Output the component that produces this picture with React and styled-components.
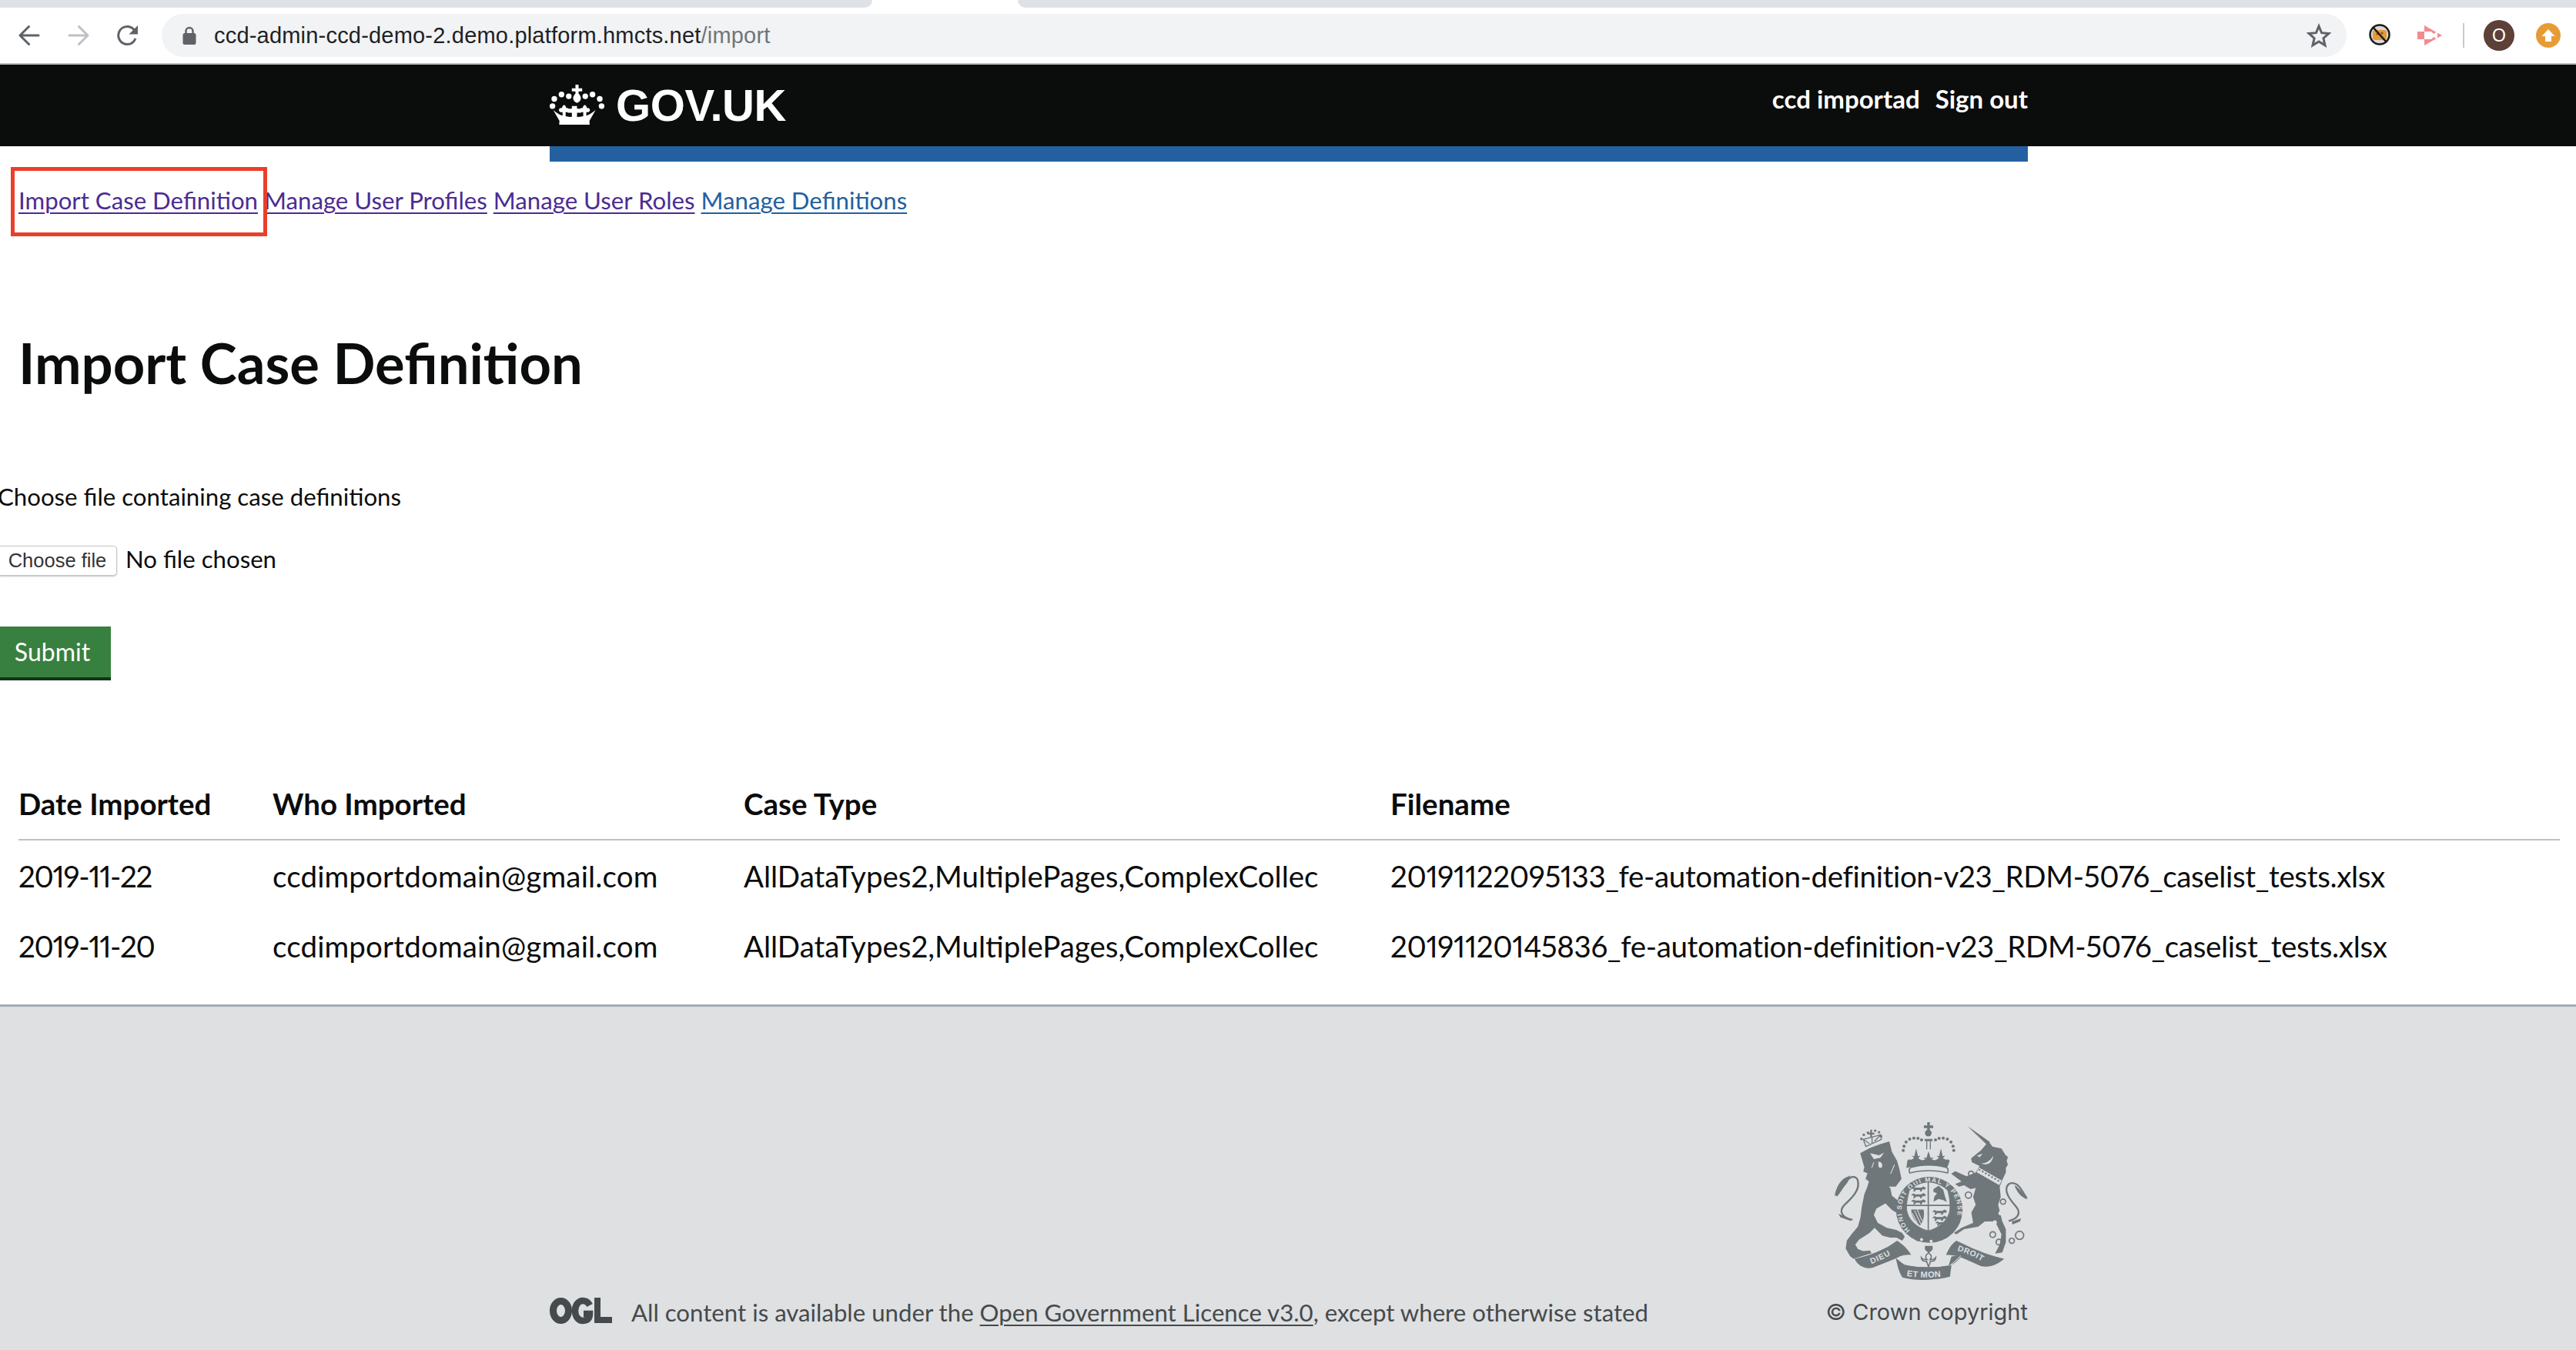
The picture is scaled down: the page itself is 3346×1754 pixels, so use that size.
import React from "react";
import styled, { createGlobalStyle } from "styled-components";

const BODY = `Lato, "Open Sans", "Liberation Sans", sans-serif`;

const Global = createGlobalStyle`
  html, body { margin: 0; padding: 0; background: #fff; }
  body { font-family: ${BODY}; color: #0b0c0c; overflow-x: hidden; }
  * { box-sizing: border-box; }
`;

const Page = styled.div`
  width: 3346px;
  height: 1754px;
  overflow: hidden;
  display: flex;
  flex-direction: column;
`;

/* ---------- browser chrome ---------- */
const Chrome = styled.div`
  height: 84px;
  border-bottom: 2px solid #b9babb;
  background: #fff;
  display: flex;
  flex-direction: column;
  flex: none;
`;
const TabStrip = styled.div`
  height: 10px;
  display: flex;
  justify-content: space-between;
`;
const TabEdge = styled.div`
  width: ${(p) => p.$w}px;
  background: #dee1e6;
  border-bottom-left-radius: ${(p) => (p.$right ? 12 : 0)}px;
  border-bottom-right-radius: ${(p) => (p.$right ? 0 : 12)}px;
`;
const Toolbar = styled.div`
  height: 56px;
  margin-top: 8px;
  display: flex;
  align-items: center;
  padding-left: 24px;
`;
const NavIcon = styled.svg`
  width: 28px;
  height: 28px;
  margin-right: ${(p) => p.$mr}px;
  flex: none;
`;
const Omnibox = styled.div`
  width: 2838px;
  height: 56px;
  border-radius: 28px;
  background: #f1f3f4;
  display: flex;
  align-items: center;
  padding-left: 27px;
  padding-right: 20px;
  flex: none;
`;
const LockIcon = styled.svg`
  width: 18px;
  height: 24px;
  margin-right: 23px;
  flex: none;
`;
const Url = styled.div`
  font-family: "Liberation Sans", Arial, sans-serif;
  font-size: 29px;
  color: #202124;
  flex: 1;
  white-space: nowrap;
  letter-spacing: 0.2px;
`;
const UrlPath = styled.span`
  color: #70757a;
`;
const StarIcon = styled.svg`
  width: 32px;
  height: 32px;
  flex: none;
`;
const ExtGroup = styled.div`
  display: flex;
  align-items: center;
  height: 56px;
  flex: none;
`;
const ExtIcon = styled.svg`
  width: ${(p) => p.$w}px;
  height: ${(p) => p.$h}px;
  margin-left: ${(p) => p.$ml}px;
  margin-top: ${(p) => p.$mt || 0}px;
  flex: none;
`;
const Divider = styled.div`
  width: 2px;
  height: 32px;
  background: #c8cacc;
  margin-left: 27px;
`;
const Avatar = styled.div`
  width: 40px;
  height: 40px;
  border-radius: 50%;
  background: #5d4037;
  color: #fff;
  font-family: "Liberation Sans", sans-serif;
  font-size: 23px;
  display: flex;
  align-items: center;
  justify-content: center;
  margin-left: 25px;
  flex: none;
`;
const UpdateBadge = styled.div`
  width: 32px;
  height: 32px;
  border-radius: 50%;
  background: #e69c36;
  margin-left: 28px;
  display: flex;
  align-items: center;
  justify-content: center;
  flex: none;
`;

/* ---------- gov.uk header ---------- */
const Header = styled.header`
  height: 106px;
  background: #0b0c0c;
  flex: none;
`;
const HeaderInner = styled.div`
  width: 1920px;
  margin-left: 714px;
  height: 100%;
  display: flex;
  justify-content: space-between;
  align-items: flex-start;
`;
const Logo = styled.a`
  display: flex;
  align-items: center;
  height: 96px;
  margin-top: 4px;
  gap: 15px;
  color: #fff;
  font-family: "Liberation Sans", Arial, sans-serif;
  font-weight: 700;
  font-size: 58px;
  letter-spacing: -0.4px;
`;
const CrownSvg = styled.svg`
  width: 71px;
  height: 52px;
  flex: none;
`;
const UserNav = styled.div`
  display: flex;
  gap: 20px;
  color: #fff;
  font-weight: 700;
  font-size: 33px;
  line-height: 40px;
  margin-top: 24px;
`;
const BlueBar = styled.div`
  width: 1920px;
  height: 20px;
  margin-left: 714px;
  background: #2460a0;
  flex: none;
`;

/* ---------- main content ---------- */
const Nav = styled.nav`
  height: 100px;
  padding-left: 24px;
  display: flex;
  gap: 8px;
  align-items: center;
  position: relative;
  flex: none;
`;
const NavLink = styled.a`
  font-size: 31.2px;
  line-height: 40px;
  text-decoration: underline;
  text-decoration-thickness: 2px;
  text-underline-offset: 4px;
  color: ${(p) => (p.$visited ? "#4c2c92" : "#22609f")};
`;
const Annotation = styled.div`
  position: absolute;
  left: 14px;
  top: 7px;
  width: 333px;
  height: 90px;
  border: 5px solid #ea3f2a;
  pointer-events: none;
`;
const Title = styled.h1`
  margin: 121px 0 0 24px;
  font-size: 72.4px;
  line-height: 80px;
  font-weight: 700;
`;
const Label = styled.label`
  display: block;
  margin: 114px 0 0 -3px;
  font-size: 31.2px;
  line-height: 40px;
`;
const FileRow = styled.div`
  display: flex;
  align-items: center;
  gap: 11px;
  height: 39px;
  margin-top: 44px;
  flex: none;
`;
const FileButton = styled.button`
  font-family: "Liberation Sans", Arial, sans-serif;
  font-size: 25.5px;
  width: 152px;
  height: 39px;
  padding: 0 2px 0 0;
  background: #fff;
  color: #333;
  border: 1px solid #c6c6c6;
  border-left: 0;
  border-radius: 0 5px 5px 0;
  box-shadow: 0 1px 2px rgba(0, 0, 0, 0.25);
  flex: none;
`;
const FileStatus = styled.span`
  font-size: 31.2px;
  line-height: 39px;
  margin-top: -4px;
`;
const Submit = styled.button`
  display: block;
  margin-top: 66px;
  width: 144px;
  height: 70px;
  padding: 0 8px 6px 0;
  background: #38803f;
  border: 0;
  box-shadow: inset 0 -4px 0 #15321a;
  color: #fff;
  font-family: ${BODY};
  font-size: 32px;
  flex: none;
`;
const Table = styled.table`
  margin: 113px 21px 0 24px;
  width: 3301px;
  border-collapse: collapse;
  table-layout: fixed;
  flex: none;
  font-variant-numeric: proportional-nums;
`;
const Th = styled.th`
  width: ${(p) => p.$w || "auto"};
  height: 94px;
  padding: 0;
  text-align: left;
  font-size: 38.5px;
  font-weight: 700;
  border-bottom: 2px solid #bfc1c3;
`;
const Td = styled.td`
  height: 92px;
  padding: 0;
  font-size: 38.5px;
  white-space: nowrap;
  overflow: visible;
  letter-spacing: ${(p) => p.$spacing || 0}px;
`;

/* ---------- footer ---------- */
const Footer = styled.footer`
  margin-top: 30px;
  height: 449px;
  background: #dee0e2;
  border-top: 3px solid #a1acb2;
  padding-bottom: 29px;
  display: flex;
  flex: none;
`;
const FooterInner = styled.div`
  width: 1920px;
  margin-left: 714px;
  display: flex;
  justify-content: space-between;
  align-items: flex-end;
`;
const Licence = styled.div`
  display: flex;
  align-items: center;
  gap: 25px;
  color: #454a4c;
  font-size: 31.2px;
  line-height: 40px;
  white-space: nowrap;
`;
const OglSvg = styled.svg`
  width: 81px;
  height: 36px;
  flex: none;
  margin-top: -4px;
`;
const LicenceLink = styled.a`
  color: #454a4c;
  text-decoration: underline;
  text-decoration-thickness: 2px;
  text-underline-offset: 4px;
`;
const CopyBlock = styled.div`
  display: flex;
  flex-direction: column;
  align-items: flex-end;
  gap: 22px;
`;
const CrestSvg = styled.svg`
  width: 252px;
  height: 205px;
`;
const Copy = styled.div`
  color: #454a4c;
  line-height: 40px;
  font-family: Inter, sans-serif;
  font-size: 29px;
`;

const Crown = () => (
  <CrownSvg viewBox="45 55 210 155" fill="#fff">
    <path d="M144 55h12v14h14v12h-14v8c6 6 9 13 9 19 0 9-7 15-15 18-8-3-15-9-15-18 0-6 3-13 9-19v-8h-14V69h14z" />
    {[[62, 110], [90, 93], [118, 100], [182, 100], [210, 93], [238, 110], [55, 138], [245, 138]].map(([x, y]) => (
      <circle key={x} cx={x} cy={y} r="11" />
    ))}
    <path d="M58 153c12 10 24 18 36 22v-14c-8 2-14-2-14-8 0-5 6-9 12-7 0-6 3-10 8-13 5 3 8 7 8 13 6-2 12 2 12 7 0 6-6 10-14 8v16c8 2 16 3 24 3v-16h-16v-16h16v-10h20v10h16v16h-16v16c8 0 16-1 24-3v-16c-8 2-14-2-14-8 0-5 6-9 12-7 0-6 3-10 8-13 5 3 8 7 8 13 6-2 12 2 12 7 0 6-6 10-14 8v14c12-4 24-12 36-22l-24 42 1 15H81l1-15z" />
  </CrownSvg>
);

const Ogl = () => (
  <OglSvg viewBox="0 0 81 36" fill="none" stroke="#454a4c">
    <ellipse cx="14.500" cy="18" rx="10" ry="12.500" strokeWidth="9" />
    <path d="M52 11c-2-4-5-6-9-6-6 0-10 6-10 13s4 13 10 13c6 0 9-3 9-9h-8" strokeWidth="8.500" />
    <path d="M62 1v29h19" strokeWidth="8" />
  </OglSvg>
);

const C = "#6f777b";
const B = "#dee0e2";

const crownDots = [
  [459, 195], [462, 178], [470, 162], [484, 151], [500, 147], [516, 148], [530, 154],
  [655, 195], [652, 178], [644, 162], [630, 151], [614, 147], [598, 148], [584, 154],
];
const lionCrownDots = [[297, 150], [306, 134], [322, 126], [350, 118], [365, 124], [373, 140]];
const passant = "M0 8l10-7 6 4h24l8-5 10 6-5 7-8-2-4 9h-6v-6H19l-4 6H9l2-10-7-1z";

const Crest = () => (
  <CrestSvg viewBox="190 85 752 612">
    <defs>
      <path id="garter" d="M486 505A109 109 0 1 1 636 505" />
      <path id="rib-l" d="M335 635Q390 615 436 583" />
      <path id="rib-c" d="M472 682Q555 694 645 680" />
      <path id="rib-r" d="M668 583Q730 600 788 640" />
      <path id="passant" d={passant} />
    </defs>

    {/* lion */}
    <path fill={C} d="M292 205l38-20 40-15 35-10 10 40 20 35 10 35 7 35-22 30h-22l7 35 25 20 22 20 3 20-25 10-25-15-25-25-35 20-10 25 15 30 35 20 37 8 23 12 10 15-10 15-22-12-25 0-30-8-30-30-20 20-40 25-15 20 10 17 20 8 27-2 6 10-38 12-32 10-13-10-17-30 4-30 18-25 25-30 10-35 5-40 10-50 10-25 8-25-13-10 7-22-16-6 4-17z" />
    <path fill={B} d="M330 205l35 8 20-10-15 20-25 5zM362 238c12 0 18 10 15 20-3 6-12 6-14-2z" />
    <path fill="none" stroke={B} strokeWidth="3" d="M405 335l35 32M345 240l-8 22M425 250l-15 35" />
    <path fill="none" stroke={C} strokeWidth="7" d="M262 463c-35-4-58-30-30-58 30-28 62-60 50-96-8-18-28-14-42 4-14 18-24 40-40 58" />
    <path fill={C} d="M193 372c4-30 20-60 42-72l20-8c-8 12-6 22-18 34-12 14-24 34-44 46zM208 440l50 22-3 6-40-14z" />
    <path fill="none" stroke={C} strokeWidth="4" d="M304 152l68-18 2 18-60 27zM304 152l24 16M372 134l-25 25M338 143v26" />
    <path fill={C} d="M322 126h9v-12h7v12h9v7h-9v9h-7v-9h-9z" />
    {lionCrownDots.map(([x, y]) => (
      <circle key={`${x}-${y}`} cx={x} cy={y} r="5" fill={C} />
    ))}

    {/* unicorn */}
    <path fill={C} d="M708 100l87 62-12 10z" />
    <path fill={C} d="M722 225l38-30 30-35 15 20 35 7 15 25 10 8-5 15 5 15-8 12 0 18-12 25-12 30 4 40-10 30 16 65 14 30v50l-14 40-28 5 18-35 7-40-25-50h-40l-25 20-55 10-30 20-10-5 30-20 45-20-7-40 17-30-10-30 10-35-20 5-25-15-20 5-15-10 25-10-40-30 15-10 45 20 35-15 15-25-30-15z" />
    <path fill="none" stroke={B} strokeWidth="20" d="M748 270l88 50" />
    <path fill="none" stroke={C} strokeWidth="6" strokeDasharray="7 7" d="M752 268l82 48" />
    <path fill="none" stroke={C} strokeWidth="3" d="M744 284l86 50" />
    <path fill={B} d="M745 215l22-8-12 14z" />
    <path fill={B} d="M760 245c20 0 38-10 48-30-2 24-20 42-48 30z" />
    <path fill="none" stroke={C} strokeWidth="7" d="M868 468c35-8 50-30 28-56-20-24-42-50-36-74 8-24 36-22 54 4l24 38" />
    <path fill={C} d="M940 384c-26-8-40-28-50-54 16 8 24 20 50 54zM880 470l36-12-4 12-30 12z" />
    <g fill="none" stroke={C} strokeWidth="5">
      <circle cx="722" cy="285" r="10" />
      <circle cx="712" cy="368" r="12" />
      <circle cx="846" cy="393" r="10" />
      <circle cx="806" cy="521" r="11" />
      <circle cx="830" cy="550" r="11" />
      <circle cx="880" cy="545" r="10" />
      <circle cx="910" cy="524" r="16" />
    </g>
    <g fill={B}>
      <circle cx="836" cy="438" r="8" />
      <circle cx="814" cy="474" r="8" />
    </g>

    {/* royal crown */}
    <path fill={C} d="M552 85h10v13h13v10h-13v8h-10v-8h-13V98h13z" />
    <circle cx="556" cy="127" r="13" fill={C} />
    <path fill="none" stroke={C} strokeWidth="4" d="M550 160v30M564 160v30" />
    <path fill={C} d="M542 150h30v9h-30zM475 235c3-6 8-6 12-4l14-6-8-10 9 2 7-30 7 30 9-2-8 10 14 8 14-3-8-8 12 2 8-26 8 26 12-2-8 8 14 3 14-8-8-10 9 2 7-30 7 30 9-2-8 10 14 6c4-2 9-2 12 4l-10 28c-50-14-110-14-158 0z" />
    {crownDots.map(([x, y]) => (
      <circle key={`${x}-${y}`} cx={x} cy={y} r="6" fill={C} />
    ))}
    <path fill={B} stroke={C} strokeWidth="5" d="M484 282c-4-10-2-18 6-22 40-12 95-12 135 0 8 4 10 12 6 22-45-12-102-12-147 0z" />

    {/* garter and shield */}
    <ellipse cx="560" cy="425" rx="129" ry="128" fill={C} />
    <text fontFamily="Liberation Sans, sans-serif" fontWeight="700" fontSize="25" fill={B} letterSpacing="4">
      <textPath href="#garter" startOffset="0">HONI SOIT QUI MAL Y PENSE</textPath>
    </text>
    <path fill={B} stroke={C} strokeWidth="3" d="M482 350c18-20 48-32 74-34 29 2 59 14 76 34 8 30 10 50 8 75-5 40-40 70-84 82-44-12-79-42-84-82-2-25 2-45 10-75z" />
    <path stroke={C} strokeWidth="5" d="M556 316v190M472 408h168" />
    <g fill={C}>
      <use href="#passant" x="489" y="334" />
      <use href="#passant" x="489" y="360" />
      <use href="#passant" x="489" y="384" />
      <use href="#passant" x="571" y="424" />
      <use href="#passant" x="571" y="448" />
      <use href="#passant" x="574" y="472" transform="translate(66 44) scale(.9)" />
      <path d="M576 345l20-14 18 16 8 30 6 18-14-8-18-4-20 10 4-20 10-12-14-6z" />
      <path d="M490 424h48c4 20 0 46-14 62-16-10-34-36-34-62z" />
    </g>
    <path fill="none" stroke={B} strokeWidth="3" d="M503 428l24 52M494 438l22 44M513 424l19 44" />

    {/* band under the shield */}
    <path fill={C} d="M480 510l30-5 40 16 24-10 38 4 20 16-60 20-60-5-28-20z" />
    <circle cx="530" cy="540" r="6" fill={B} />
    <circle cx="567" cy="547" r="6" fill={B} />

    {/* motto ribbon */}
    <path fill={C} d="M270 615c60-12 120-36 165-70 22 14 40 30 55 55-18-2-40 2-56 12l-25 10-70 28c-30 6-55-8-69-35z" />
    <path fill={C} d="M430 612c14 10 30 24 44 28 50 10 110 10 166 0 20-6 34-22 50-40l-44 6-14 44c-4 14-16 36-22 38-50 12-104 12-152 0-8-6-14-24-20-42-2-10-6-24-8-34z" />
    <path fill={C} d="M625 600c10-22 20-42 40-55 50 24 115 55 185 70-26 24-60 36-90 28l-55-24c-24-12-50-20-80-19z" />
    <path fill={C} d="M466 640c50 10 130 10 180 0l-6 44c-50 14-118 14-168 0z" />
    <path fill="none" stroke={B} strokeWidth="3" d="M434 612c8 6 24 22 34 26M682 603c-12 12-28 30-40 35" />
    <text fontFamily="Liberation Sans, sans-serif" fontWeight="700" fontSize="31" fill={B} letterSpacing="3">
      <textPath href="#rib-l">DIEU</textPath>
    </text>
    <text fontFamily="Liberation Sans, sans-serif" fontWeight="700" fontSize="33" fill={B} letterSpacing="1">
      <textPath href="#rib-c">ET MON</textPath>
    </text>
    <text fontFamily="Liberation Sans, sans-serif" fontWeight="700" fontSize="31" fill={B} letterSpacing="2">
      <textPath href="#rib-r">DROIT</textPath>
    </text>

    {/* rose and stem */}
    <path fill={C} d="M543 565h30v14l-15 14-15-14z" />
    <path fill="none" stroke={C} strokeWidth="5" d="M557 592c-12 8-14 18-6 26-8 0-18-2-22-8 0 10 8 16 20 14l8 22 8-22c12 2 20-4 20-14-4 6-14 8-22 8 8-8 6-18-6-26z" />
  </CrestSvg>
);

const rows = [
  ["2019-11-22", "20191122095133_fe-automation-definition-v23_RDM-5076_caselist_tests.xlsx"],
  ["2019-11-20", "20191120145836_fe-automation-definition-v23_RDM-5076_caselist_tests.xlsx"],
];

export default function App() {
  return (
    <Page>
      <Global />
      <Chrome>
        <TabStrip>
          <TabEdge $w={1133} />
          <TabEdge $w={2024} $right />
        </TabStrip>
        <Toolbar>
          <NavIcon $mr={36} viewBox="0 0 28 28" fill="none" stroke="#5f6368" strokeWidth="3" strokeLinecap="round" strokeLinejoin="round">
            <path d="M26 14H2.500M13.500 2.500L2 14l11.500 11.500" />
          </NavIcon>
          <NavIcon $mr={36} viewBox="0 0 28 28" fill="none" stroke="#bdc1c6" strokeWidth="3" strokeLinecap="round" strokeLinejoin="round">
            <path d="M2 14h23.500M14.500 2.500L26 14 14.500 25.500" />
          </NavIcon>
          <NavIcon $mr={30} viewBox="0 0 28 28">
            <path fill="none" stroke="#5f6368" strokeWidth="3" d="M24 18c-1.800 4.500-5.500 7.500-10.500 7.500A11.500 11.500 0 1 1 22 6.500L25 9" />
            <path fill="#5f6368" d="M27 1v11.500H15.500z" />
          </NavIcon>
          <Omnibox>
            <LockIcon viewBox="0 0 18 24">
              <path fill="none" stroke="#5f6368" strokeWidth="2.500" d="M4.500 10V6.500a4.500 4.500 0 0 1 9 0V10" />
              <rect x="0.500" y="9" width="17" height="15" rx="2.500" fill="#5f6368" />
            </LockIcon>
            <Url>
              ccd-admin-ccd-demo-2.demo.platform.hmcts.net<UrlPath>/import</UrlPath>
            </Url>
            <StarIcon viewBox="0 0 32 32" fill="none" stroke="#5f6368" strokeWidth="3" strokeLinejoin="miter">
              <path d="M16 4l3.600 8.700 9.400.800-7.100 6.200 2.100 9.200-8-4.900-8 4.900 2.100-9.200L3 13.500l9.400-.800z" />
            </StarIcon>
          </Omnibox>
          <ExtGroup>
            <ExtIcon $w={30} $h={30} $ml={28} $mt={-3} viewBox="0 0 30 30">
              <circle cx="15" cy="15" r="12.500" fill="#d9d9d9" stroke="#1a1a1a" strokeWidth="2.500" />
              <rect x="6" y="9" width="18" height="13" rx="3" fill="#e89a35" />
              <circle cx="12" cy="14" r="1.500" fill="#7a5a30" />
              <circle cx="18" cy="13" r="1.500" fill="#7a5a30" />
              <path d="M6 5l18 20" stroke="#1a1a1a" strokeWidth="2.500" />
            </ExtIcon>
            <ExtIcon $w={32} $h={26} $ml={34} viewBox="0 0 32 26">
              <path fill="#f28b8f" d="M0 8h9V0l23 13L9 26v-8H0z" />
              <path fill="#fff" d="M9 8h9l3 3 5-3v10l-5-3-3 3H9z" />
            </ExtIcon>
            <Divider />
            <Avatar>O</Avatar>
            <UpdateBadge>
              <svg width="18" height="18" viewBox="0 0 18 18">
                <path fill="#fff" d="M9 1l8.500 9H13v7H5v-7H.500z" />
              </svg>
            </UpdateBadge>
          </ExtGroup>
        </Toolbar>
      </Chrome>

      <Header>
        <HeaderInner>
          <Logo>
            <Crown />
            GOV.UK
          </Logo>
          <UserNav>
            <span>ccd importad</span>
            <span>Sign out</span>
          </UserNav>
        </HeaderInner>
      </Header>
      <BlueBar />

      <Nav>
        <NavLink $visited>Import Case Definition</NavLink>
        <NavLink $visited>Manage User Profiles</NavLink>
        <NavLink $visited>Manage User Roles</NavLink>
        <NavLink>Manage Definitions</NavLink>
        <Annotation />
      </Nav>

      <Title>Import Case Definition</Title>
      <Label>Choose file containing case definitions</Label>
      <FileRow>
        <FileButton type="button">Choose file</FileButton>
        <FileStatus>No file chosen</FileStatus>
      </FileRow>
      <Submit>Submit</Submit>

      <Table>
        <thead>
          <tr>
            <Th $w="330px">Date Imported</Th>
            <Th $w="612px">Who Imported</Th>
            <Th $w="840px">Case Type</Th>
            <Th>Filename</Th>
          </tr>
        </thead>
        <tbody>
          {rows.map(([date, file]) => (
            <tr key={date}>
              <Td $spacing={-1.3}>{date}</Td>
              <Td $spacing={0.15}>ccdimportdomain@gmail.com</Td>
              <Td>AllDataTypes2,MultiplePages,ComplexCollec</Td>
              <Td $spacing={-0.35}>{file}</Td>
            </tr>
          ))}
        </tbody>
      </Table>

      <Footer>
        <FooterInner>
          <Licence>
            <Ogl />
            <span>
              All content is available under the <LicenceLink>Open Government Licence v3.0</LicenceLink>, except where otherwise stated
            </span>
          </Licence>
          <CopyBlock>
            <Crest />
            <Copy>© Crown copyright</Copy>
          </CopyBlock>
        </FooterInner>
      </Footer>
    </Page>
  );
}
